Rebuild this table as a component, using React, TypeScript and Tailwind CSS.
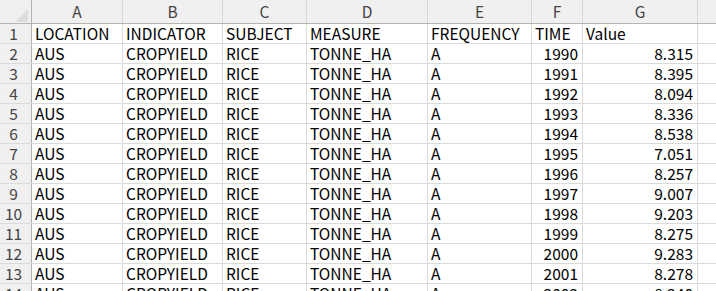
import React from 'react';

const columns = [
    { key: 'A', width: 'w-[91px]' },
    { key: 'B', width: 'w-[100px]' },
    { key: 'C', width: 'w-[84px]' },
    { key: 'D', width: 'w-[121px]' },
    { key: 'E', width: 'w-[104px]' },
    { key: 'F', width: 'w-[51px]' },
    { key: 'G', width: 'w-[115px]' },
];

const values = ['8.315', '8.395', '8.094', '8.336', '8.538', '7.051', '8.257', '9.007', '9.203', '8.275', '9.283', '8.278', '8.240'];

type Cell = { text: string; right?: boolean };

const rows: Cell[][] = [
    [
        { text: 'LOCATION' },
        { text: 'INDICATOR' },
        { text: 'SUBJECT' },
        { text: 'MEASURE' },
        { text: 'FREQUENCY' },
        { text: 'TIME' },
        { text: 'Value' },
    ],
    ...values.map((v, i) => [
        { text: 'AUS' },
        { text: 'CROPYIELD' },
        { text: 'RICE' },
        { text: 'TONNE_HA' },
        { text: 'A' },
        { text: String(1990 + i), right: true },
        { text: v, right: true },
    ]),
];

export default function App() {
    return (
        <div className="h-[291px] w-[716px] overflow-hidden bg-white font-['Noto_Sans_CJK_JP','Noto_Sans',sans-serif] text-[15.5px] leading-[19px] text-black">
            <div className="flex h-[24px] border-b border-[#b4b4b4] bg-[#f0f0f0] text-[#444]">
                <div className="relative w-[32px] shrink-0 border-r border-[#b4b4b4]">
                    <div className="absolute bottom-[1px] right-[3px] h-0 w-0 border-b-[13px] border-l-[13px] border-b-[#dcdcdc] border-l-transparent" />
                </div>
                {columns.map((c) => (
                    <div key={c.key} className={`${c.width} flex shrink-0 items-center justify-center border-r border-[#d6d6d6]`}>
                        {c.key}
                    </div>
                ))}
                <div className="flex-1" />
            </div>
            {rows.map((row, ri) => (
                <div key={ri} className="flex h-[20px] border-b border-[#dadada]">
                    <div className="flex w-[32px] shrink-0 items-center justify-center border-r border-[#b4b4b4] bg-[#f0f0f0] pr-[4px] text-[#444]">
                        {ri + 1}
                    </div>
                    {row.map((cell, ci) => (
                        <div
                            key={ci}
                            className={`${columns[ci].width} flex shrink-0 items-center whitespace-nowrap border-r border-[#dadada] ${cell.right ? 'justify-end pr-[4px]' : 'pl-[3px]'}`}
                        >
                            {cell.text}
                        </div>
                    ))}
                    <div className="flex-1" />
                </div>
            ))}
        </div>
    );
}
